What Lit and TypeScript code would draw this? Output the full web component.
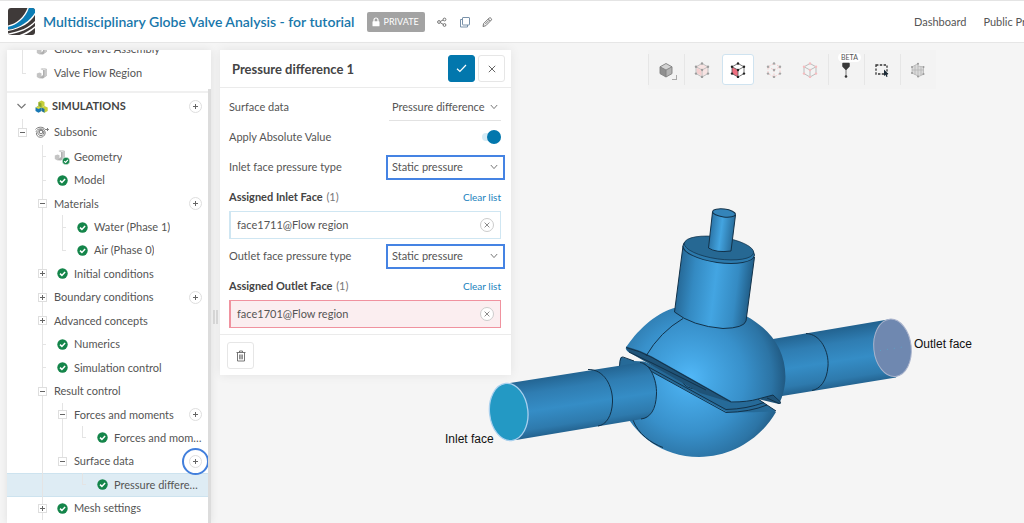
import { LitElement, html, svg, css, nothing } from "lit";
import { customElement, property } from "lit/decorators.js";
import { classMap } from "lit/directives/class-map.js";

type Guide = "" | "line" | "tick" | "end" | "top";

interface TreeNode {
  label: string;
  /** Guide cells drawn left of the node, one for each ancestor level. */
  guides: Guide[];
  toggle?: "+" | "-";
  icon?: "ok" | "part" | "flow";
  add?: boolean;
  ringed?: boolean;
  selected?: boolean;
}

const PARTS: TreeNode[] = [
  { label: "Globe Valve Assembly", guides: ["line"], icon: "part" },
  { label: "Valve Flow Region", guides: ["end"], icon: "part" },
];

const ROOT: TreeNode = { label: "Subsonic", guides: ["top"], toggle: "-", icon: "flow" };

const NODES: TreeNode[] = [
  { label: "Geometry", guides: ["", "tick"], icon: "part" },
  { label: "Model", guides: ["", "tick"], icon: "ok" },
  { label: "Materials", guides: ["", "line"], toggle: "-", add: true },
  { label: "Water (Phase 1)", guides: ["", "line", "tick"], icon: "ok" },
  { label: "Air (Phase 0)", guides: ["", "line", "end"], icon: "ok" },
  { label: "Initial conditions", guides: ["", "line"], toggle: "+", icon: "ok" },
  { label: "Boundary conditions", guides: ["", "line"], toggle: "+", add: true },
  { label: "Advanced concepts", guides: ["", "line"], toggle: "+" },
  { label: "Numerics", guides: ["", "tick"], icon: "ok" },
  { label: "Simulation control", guides: ["", "tick"], icon: "ok" },
  { label: "Result control", guides: ["", "line"], toggle: "-" },
  { label: "Forces and moments", guides: ["", "line", "line"], toggle: "-", add: true },
  { label: "Forces and moments 1", guides: ["", "line", "line", "end"], icon: "ok" },
  { label: "Surface data", guides: ["", "line", "top"], toggle: "-", add: true, ringed: true },
  { label: "Pressure difference 1", guides: ["", "line", "", "end"], icon: "ok", selected: true },
  { label: "Mesh settings", guides: ["", "line"], toggle: "+", icon: "ok" },
];

const okIcon = html`<svg width="11" height="11" viewBox="0 0 11 11" aria-hidden="true">
  <circle cx="5.5" cy="5.5" r="5.2" fill="#14854a" />
  <path d="M3 5.6 4.9 7.4 8.1 3.9" fill="none" stroke="#fff" stroke-width="1.5" />
</svg>`;

const partShape = svg`
  <path d="M.8 6.5 3.5 5.5 5.5 6.3V10L3 11.200.8 10Z" fill="#c4c4c4" />
  <path d="M4.5 2 7.2 1 11 2V8.500L7 11.500 3 11.200 5.500 9.200 7 8V3.200Z" fill="#b0b0b0" />
  <path d="M4.5 2 7.2 1 11 2 8.4 3.2Z" fill="#dedede" />
  <path d="M8.4 3.2 11 2V8.5L8.4 10.300Z" fill="#cbcbcb" />`;

const partIcon = html`<svg width="12" height="12" viewBox="0 0 12 12" aria-hidden="true">${partShape}</svg>`;

const partOkIcon = html`<svg width="16" height="16" viewBox="0 0 16 16" aria-hidden="true">
  ${partShape}
  <circle cx="12" cy="12" r="3.8" fill="#14854a" stroke="#fff" stroke-width=".6" />
  <path d="M10.2 12.1 11.6 13.4 13.9 10.9" fill="none" stroke="#fff" stroke-width="1.1" />
</svg>`;

const flowIcon = html`<svg width="14" height="12" viewBox="0 0 14 12" fill="none" stroke="#6d6d6d" stroke-width=".9" aria-hidden="true">
  <circle cx="6" cy="6" r="1.8" />
  <path d="M.5 3.4C3 .6 8 .4 10.2 3.5H13.4M12 2l1.5 1.5L12 5" />
  <path d="M1 5.8C2 2.6 7.5 1.8 9.5 4.5 11.5 8 8.5 11.3 5.5 11.3 2.5 11.3 .9 8.5 1.5 6.5" />
  <path d="M2.8 6.3C3 3.7 7 2.8 8.5 5.2 9.5 7.5 8 9.6 6 9.6 4 9.6 2.8 8 2.8 6.3" />
</svg>`;

@customElement("tree-row")
class TreeRow extends LitElement {
  @property({ attribute: false }) node!: TreeNode;

  static styles = css`
    :host { display: block; min-width: 0; }
    .row {
      display: flex;
      align-items: stretch;
      height: 100%;
      box-sizing: border-box;
      padding: 0 6px 0 5px;
      white-space: nowrap;
    }
    .selected {
      background: #deecf4;
      box-shadow: inset 0 1px #cde3ef, inset 0 -1px #cde3ef;
    }
    .cell {
      flex: 0 0 20px;
      display: grid;
      place-items: center;
      background-repeat: no-repeat;
    }
    .line, .tick, .end, .top {
      --guide: linear-gradient(#e4e4e4, #e4e4e4);
      background-image: var(--guide);
      background-size: 1px 100%;
      background-position: 10px 0;
    }
    .tick, .end { background-image: var(--guide), var(--guide); }
    .tick { background-size: 1px 100%, 4px 1px; background-position: 10px 0, 10px 50%; }
    .end { background-size: 1px 50%, 4px 1px; background-position: 10px 0, 10px 50%; }
    .top { background-size: 1px 50%; }
    button {
      display: grid;
      place-items: center;
      box-sizing: border-box;
      margin: 0;
      padding: 0;
      background: #fff;
      border: 1px solid #dedede;
      color: #666;
    }
    .toggle { width: 9px; height: 9px; }
    .add { position: relative; align-self: center; width: 13px; height: 13px; border-radius: 50%; margin-left: auto; flex: none; }
    .ring {
      position: absolute;
      inset: -8px;
      border: 2px solid #427fdc;
      border-radius: 50%;
    }
    .label {
      align-self: center;
      padding-left: 2px;
      min-width: 0;
      line-height: 16px;
      overflow: hidden;
      text-overflow: ellipsis;
    }
    svg { display: block; }
  `;

  private icon() {
    const { icon, label } = this.node;
    if (!icon) return nothing;
    const drawn = icon === "ok" ? okIcon : icon === "flow" ? flowIcon : label === "Geometry" ? partOkIcon : partIcon;
    return html`<span class="cell">${drawn}</span>`;
  }

  render() {
    const n = this.node;
    return html`<div class=${classMap({ row: true, selected: !!n.selected })}>
      ${n.guides.map((g, i) => html`<span class="cell ${g}">${
        n.toggle && i === n.guides.length - 1
          ? html`<button class="toggle" aria-label=${(n.toggle === "+" ? "Expand " : "Collapse ") + n.label}>
              <svg width="5" height="5" viewBox="0 0 5 5" stroke="currentColor"><path d=${n.toggle === "+" ? "M0 2.5H5M2.5 0V5" : "M0 2.5H5"} /></svg>
            </button>`
          : nothing
      }</span>`)}
      ${this.icon()}
      <span class="label">${n.label}</span>
      ${n.add
        ? html`<button class="add" aria-label=${"Add to " + n.label}>
            <svg width="5" height="5" viewBox="0 0 5 5" stroke="currentColor"><path d="M0 2.5H5M2.5 0V5" /></svg>
            ${n.ringed ? html`<span class="ring"></span>` : nothing}
          </button>`
        : nothing}
    </div>`;
  }
}

@customElement("valve-model")
class ValveModel extends LitElement {
  static styles = css`
    :host { display: block; }
    svg { display: block; width: 100%; height: 100%; }
    .edge { fill: none; stroke: #12324a; stroke-width: 1; }
    .note { font: 12px "Liberation Sans", Arial, sans-serif; fill: #111; }
  `;

  render() {
    return html`<svg viewBox="0 43 1024 480" role="img" aria-label="Globe valve with inlet face and outlet face">
      <defs>
        <radialGradient id="ball" gradientUnits="userSpaceOnUse" cx="690" cy="378" r="100">
          <stop offset="0" stop-color="#52b8f8" />
          <stop offset=".2" stop-color="#46a8e6" />
          <stop offset=".55" stop-color="#3890ca" />
          <stop offset=".82" stop-color="#2c74a5" />
          <stop offset="1" stop-color="#1d5177" />
        </radialGradient>
        <linearGradient id="inletPipe" gradientUnits="userSpaceOnUse" x1="570" y1="372" x2="579" y2="431">
          <stop offset="0" stop-color="#22628f" />
          <stop offset=".25" stop-color="#2f7db2" />
          <stop offset=".55" stop-color="#358dc6" />
          <stop offset=".85" stop-color="#2e7aad" />
          <stop offset="1" stop-color="#22608c" />
        </linearGradient>
        <linearGradient id="outletPipe" gradientUnits="userSpaceOnUse" x1="830" y1="329" x2="839" y2="388">
          <stop offset="0" stop-color="#22628f" />
          <stop offset=".25" stop-color="#2f7db2" />
          <stop offset=".55" stop-color="#358dc6" />
          <stop offset=".85" stop-color="#2e7aad" />
          <stop offset="1" stop-color="#22608c" />
        </linearGradient>
        <linearGradient id="neck" gradientUnits="userSpaceOnUse" x1="679" y1="280" x2="751" y2="289">
          <stop offset="0" stop-color="#276b9a" />
          <stop offset=".2" stop-color="#348ac2" />
          <stop offset=".5" stop-color="#43a5e2" />
          <stop offset=".8" stop-color="#358bc3" />
          <stop offset="1" stop-color="#215d87" />
        </linearGradient>
        <linearGradient id="stem" gradientUnits="userSpaceOnUse" x1="710" y1="232" x2="734" y2="235">
          <stop offset="0" stop-color="#2b75a8" />
          <stop offset=".45" stop-color="#43a4e0" />
          <stop offset="1" stop-color="#276a98" />
        </linearGradient>
      </defs>

      <path d="M770 339.5 888 319.5 Q912 340 896 377.5L776 397Z" fill="url(#outletPipe)" />
      <path class="edge" d="M806 333.5C821 334 829 352 828 366 827 381 820 389 812 390.5" />
      <ellipse cx="892.5" cy="347.8" rx="18.7" ry="28.8" transform="rotate(-6 892.5 347.8)" fill="#6f88b0" stroke="#a9b3cc" />
      <path d="M880 350.5 903 347" stroke="#5f9fc4" stroke-dasharray="1 6" />

      <path d="M621 357 Q619 359 620 365 L626 415 C637 434 661 457 699 457 733 457 762 437 776 412 L758 399 730 400 645 362 640 363 634 361Z" fill="url(#ball)" />
      <path d="M621 357 634 361 644 361.5 730 400 758 399 776 411 Q752 413 727 412 L643 367 619.5 366Z" fill="#266a98" />
      <path d="M681.500 378 712 393 706 391Q684 391 681.500 378Z" fill="#3485ba" />
      <path class="edge" d="M681.500 378C682 386 690 390 704 389.500" />
      <path class="edge" d="M619.5 366 Q620 356 623 357 L634 361M643 364 726 409.500 Q747 409 764 402.500M758 399 776 411M645 368 726 412.500 Q750 412 767 405" stroke-width=".9" />
      <path class="edge" d="M633 420C638 434 651 443 663 447.5" />

      <path d="M625.7 348 C636 332 654 314 674 308 L746 316 C772 330 787 352 785.3 381 Q784 394 779.500 403 L767 398 758 399 Q746 402.500 730 402.300 L630 353Q626 351 625.7 348Z" fill="url(#ball)" />
      <path d="M626 346.5 Q640 350 652 356.500 L731 401 731 402.5 700 393 632 354Q626 351 626 346.5Z" fill="#1f5378" />
      <path d="M758 399 773 395 781 403.500 779 404Z" fill="#1f5378" />
      <path class="edge" d="M626 347.5 Q640 351 652 357.500 L731 402 Q748 402 758 399L773 395 781 402.500 779 403.500 767 398" />
      <path class="edge" d="M629 352 652 363 706 390" stroke-width=".8" />
      <path class="edge" d="M683 318.5 Q660 332 646 356" />

      <path d="M510 383 640 362.5 Q658 370 656.5 394 Q655 413 645 418.5 L516 440Z" fill="url(#inletPipe)" />
      <path class="edge" d="M588 369.5C604 369 613 386 612.5 402 612 416 606 425 598 426" />
      <path class="edge" d="M640 362.5C650 363 657 380 656.5 394 656 410 650 418 641 419" />
      <ellipse cx="508.7" cy="412" rx="19.2" ry="28.7" transform="rotate(-6 508.7 412)" fill="#2399c4" stroke="#a9d0ee" stroke-width="1.3" />

      <path d="M683 246 674.5 312 Q692 326 723 328.5 Q744 328 746 321 L754.5 257Z" fill="url(#neck)" />
      <path class="edge" d="M683 246 674.5 312 Q692 326 723 328.5 Q744 328 746 321 L754.5 257" />
      <ellipse cx="718.7" cy="250.5" rx="36" ry="12" transform="rotate(8 718.7 250.5)" fill="#2c7aad" stroke="#12324a" />
      <ellipse cx="719" cy="248" rx="35" ry="11" transform="rotate(8 719 248)" fill="#266893" stroke="#12324a" stroke-width=".7" />
      <path d="M712.5 212 708.5 248 Q714 253 731 251 L735.5 215Z" fill="url(#stem)" />
      <path class="edge" d="M712.5 212 708.5 248 Q716 253 731 251 L735.5 215" />
      <ellipse cx="724" cy="213" rx="11.5" ry="4" transform="rotate(7 724 213)" fill="#3484b9" stroke="#12324a" />

      <text class="note" x="445" y="443">Inlet face</text>
      <text class="note" x="914" y="348">Outlet face</text>
    </svg>`;
  }
}

const HEX = "M8 1.5 14 4.8V11.6L8 15 2 11.6V4.8Z";
const dots = (color: string) =>
  svg`${[[8, 1.5], [14, 4.8], [14, 11.6], [8, 15], [2, 11.6], [2, 4.8], [8, 8]].map(
    ([x, y]) => svg`<circle cx=${x} cy=${y} r="1.2" fill=${color} />`
  )}`;

const TOOLS = [
  { name: "Shading", sep: true, art: svg`<path d="M8 1.5 14 4.8 8 8 2 4.8Z" fill="#d2d2d2" /><path d="M2 4.8 8 8V15L2 11.6Z" fill="#8f8f8f" /><path d="M14 4.8 8 8V15L14 11.6Z" fill="#b2b2b2" /><path d="${HEX}M2 4.8 8 8 14 4.8M8 8V15" fill="none" stroke="#808080" stroke-width=".9" />` },
  { name: "Select volumes", sep: true, art: svg`<path d=${HEX} fill="#f7e3e2" /><path d="${HEX}M2 4.8 8 8 14 4.8M8 8V15" fill="none" stroke="#c0c0c0" />${dots("#9c9c9c")}<path d="M3 6 7.3 8.5V13.5L3 11Z" fill="#f4cfcf" />` },
  { name: "Select faces", active: true, art: svg`<path d="M2 4.8 8 8V15L2 11.6Z" fill="#ef6f80" /><path d="${HEX}M2 4.8 8 8 14 4.8M8 8V15" fill="none" stroke="#555" stroke-width=".8" />${dots("#222")}` },
  { name: "Select edges", art: svg`<path d="${HEX}M2 4.8 8 8 14 4.8M8 8V15" fill="none" stroke="#f4caca" stroke-dasharray="2 1.5" />${dots("#a6a6a6")}` },
  { name: "Select vertices", art: svg`<path d="${HEX}M2 4.8 8 8 14 4.8M8 8V15" fill="none" stroke="#bdbdbd" />${dots("#f6bcbf")}` },
  { name: "Probe", sep: true, badge: "BETA", art: svg`<path d="M8 4V14" stroke="#777" /><path d="M5 1.5H11V4.2L8 7.2 5 4.2Z" fill="#3a3a3a" stroke="#3a3a3a" stroke-width="1.5" stroke-linejoin="round" /><circle cx="8" cy="14.5" r="1.3" fill="#333" />` },
  { name: "Box select", sep: true, art: svg`<rect x="2" y="3" width="11" height="9" fill="none" stroke="#333" stroke-width="1.3" stroke-dasharray="2.4 1.4" /><path d="M10 7.5 14.5 12 12.6 12.2 13.6 14.6 12.4 15 11.5 12.8 10 14Z" fill="#1b2a36" />` },
  { name: "Clip", sep: true, art: svg`<path d="M2 5 8 2V14L2 11Z M8 4 13.5 6V13L8 15Z" fill="#dadada" /><path d="M2 5 8 1.5V14L2 11ZM8 4 13.5 5V12L8 15M2 8 13.5 8M5 3V13M11 4V13" fill="none" stroke="#b5b5b5" stroke-width=".8" /><circle cx="8" cy="1.8" r="1" fill="#999" /><circle cx="2" cy="5" r="1" fill="#999" /><circle cx="2" cy="11" r="1" fill="#999" /><circle cx="8" cy="14.5" r="1" fill="#999" /><circle cx="13.5" cy="5" r="1" fill="#999" /><circle cx="13.5" cy="12" r="1" fill="#999" />` },
];

@customElement("app-root")
class AppRoot extends LitElement {
  static styles = css`
    :host {
      display: flex;
      flex-direction: column;
      height: 100vh;
      overflow: hidden;
      font: 11px/16px Lato, "Open Sans", sans-serif;
      color: #555;
      background: #f5f5f5;
    }
    * { box-sizing: border-box; }
    svg { display: block; }
    button, select, input { font: inherit; color: inherit; margin: 0; }
    button { padding: 0; border: 0; background: none; }
    a { color: inherit; text-decoration: none; }
    h1, h2, h3 { margin: 0; padding: 0; }

    .topbar {
      display: flex;
      align-items: center;
      flex: 0 0 43px;
      padding-left: 8px;
      background: #fff;
      border-top: 1px solid #e4e4e4;
      border-bottom: 1px solid #e6e6e6;
      white-space: nowrap;
    }
    .title { margin-left: 8px; font-size: 14px; line-height: 20px; font-weight: 600; color: #1877ab; }
    .badge {
      display: flex;
      align-items: center;
      gap: 4px;
      height: 20px;
      margin-left: 12px;
      padding: 0 6px 0 5px;
      border-radius: 2px;
      background: #a3a3a3;
      color: #fff;
      font-size: 9px;
    }
    .actions { display: flex; gap: 10px; margin-left: 12px; }
    .actions button { width: 12px; height: 12px; }
    .nav { display: flex; gap: 17px; flex: 0 0 110px; margin-left: auto; overflow: hidden; }

    .work { position: relative; display: flex; align-items: flex-start; flex: 1; min-height: 0; padding: 7px 0 0 7px; }
    .scene { position: absolute; inset: 0; }

    .side {
      position: relative;
      flex: 0 0 204px;
      align-self: stretch;
      display: flex;
      background: #fff;
      box-shadow: 0 0 8px rgba(0, 0, 0, 0.09);
    }
    .tree { flex: 1; min-width: 0; overflow: hidden; }
    .parts { display: grid; grid-auto-rows: 24px; margin-top: -13px; padding-bottom: 6px; border-bottom: 2px solid #f0f0f0; }
    .group { display: flex; align-items: center; height: 26px; padding: 0 6px 0 8px; font-weight: 700; color: #444; }
    .group .name { margin-left: 4px; }
    .group .mark { margin-left: 8px; }
    .plus { display: grid; place-items: center; width: 13px; height: 13px; margin-left: auto; border: 1px solid #dedede; border-radius: 50%; }
    .root { height: 26px; }
    .nodes { display: grid; grid-auto-rows: 1fr; height: 375px; }
    .thumb { flex: 0 0 3px; margin-top: 39px; background: #dcdcdc; }
    .grip { align-self: center; display: flex; gap: 1px; margin: 0 2px; padding-top: 60px; }
    .grip i { width: 2px; height: 14px; background: #dcdcdc; }

    .panel {
      position: relative;
      flex: 0 0 291px;
      background: #fff;
      box-shadow: 0 0 10px rgba(0, 0, 0, 0.08);
    }
    .head { display: flex; align-items: center; gap: 3px; height: 38px; padding: 0 6px 0 12px; border-bottom: 1px solid #ebebeb; }
    .head h2 { flex: 1; font-size: 13px; line-height: 18px; color: #444; }
    .square { display: grid; place-items: center; width: 27px; height: 27px; border: 1px solid #e6e6e6; border-radius: 3px; color: #666; background: #fff; }
    .apply { background: #0277ad; border-color: #0277ad; color: #fff; }
    .form { padding: 4px 10px 6px 9px; }
    .field { display: flex; align-items: center; justify-content: space-between; height: 30px; }
    .pick { position: relative; width: 112px; color: #555; }
    .pick select {
      appearance: none;
      display: block;
      width: 100%;
      height: 28px;
      padding: 0 14px 0 3px;
      border: 0;
      border-bottom: 1px solid #e2e2e2;
      border-radius: 0;
      background: transparent;
      outline: none;
    }
    .ringed select { height: 20px; border-bottom: 0; }
    .ringed::after { content: ""; position: absolute; inset: -2px -4px -3px -3px; border: 2px solid #4583e3; pointer-events: none; }
    .pick svg { position: absolute; right: 3px; top: 50%; margin-top: -3px; pointer-events: none; }
    .switch {
      appearance: none;
      display: flex;
      justify-content: flex-end;
      align-items: center;
      width: 19px;
      height: 8px;
      border-radius: 4px;
      background: #d6ebf5;
    }
    .switch::before { content: ""; width: 14px; height: 14px; border-radius: 50%; background: #0277ad; flex: none; }
    .assigned { height: 29px; }
    .assigned h3 { font-size: 11px; color: #444; }
    .count { font-weight: 400; color: #777; margin-left: 1px; }
    .clear { font-size: 10px; color: #2182bd; }
    .face { display: flex; align-items: center; justify-content: space-between; height: 28px; padding: 0 6px; border: 1px solid #cfe6f2; border-left-width: 2px; margin-bottom: 2px; }
    .face.alert { background: #fbeef0; border-color: #f0929f; margin-bottom: 0; }
    .remove { display: grid; place-items: center; width: 14px; height: 14px; border: 1px solid #ccc; border-radius: 50%; background: #fff; color: #666; }
    .foot { padding: 7px 7px 6px; border-top: 1px solid #ebebeb; }

    .tools { position: relative; display: flex; margin: 0 88px 0 auto; padding: 4px 0; background: #f3f3f3; }
    .tool { position: relative; display: grid; place-items: center; width: 36px; height: 31px; }
    .sep { box-shadow: inset 1px 0 #e6e6e6; }
    .active::before { content: ""; position: absolute; inset: 0 2px; background: #fff; border: 1px solid #cfe3f0; border-radius: 3px; }
    .tool svg { position: relative; }
    .corner::after { content: ""; position: absolute; right: 7px; bottom: 5px; width: 4px; height: 4px; border: solid #aaa; border-width: 0 1px 1px 0; }
    .beta { position: absolute; top: -1px; left: 10px; padding: 0 3px; border-radius: 5px; background: #fff; font-size: 7px; line-height: 9px; }
  `;

  private chevron() {
    return html`<svg width="8" height="6" viewBox="0 0 8 6" fill="none" stroke="#777" aria-hidden="true"><path d="M.8 1 4 4.6 7.2 1" /></svg>`;
  }

  private cross(size: number) {
    return html`<svg width=${size} height=${size} viewBox="0 0 8 8" fill="none" stroke="currentColor" aria-hidden="true"><path d="M.8.8 7.2 7.2M7.2.8.8 7.2" /></svg>`;
  }

  private select(id: string, label: string, value: string, ringed = false) {
    return html`<div class="field">
      <label for=${id}>${label}</label>
      <span class=${classMap({ pick: true, ringed })}>
        <select id=${id}><option>${value}</option></select>
        ${this.chevron()}
      </span>
    </div>`;
  }

  private face(title: string, name: string, alert: boolean) {
    return html`<div class="field assigned">
        <h3>${title} <span class="count">(1)</span></h3>
        <button class="clear">Clear list</button>
      </div>
      <div class=${classMap({ face: true, alert })}>
        <span>${name}</span>
        <button class="remove" aria-label=${"Remove " + name}>${this.cross(6)}</button>
      </div>`;
  }

  render() {
    return html`
      <header class="topbar">
        <svg width="27" height="27" viewBox="0 0 27 27" aria-hidden="true">
          <defs><clipPath id="tile"><rect width="27" height="27" rx="3" /></clipPath></defs>
          <g clip-path="url(#tile)">
            <rect width="27" height="27" fill="#3f3a39" />
            <path d="M-1 18.5C8 17 17 10 20.5-1H28V4C24 12 14 20-1 22Z" fill="#0b7db5" />
            <path d="M-1 18.3C8 17 17 10 20.5-1" fill="none" stroke="#fff" stroke-width="1.3" />
            <path d="M-1 22C13 20 23 12 28 3V5C24 13.500 14 20.500-1 23.300ZM-1 25.500C12 24 22 19 28 12V13.800C22 20.500 12 25.500-1 27ZM8 28C16 26 23 22 28 17.5V19C24 23 18 27 12 28Z" fill="#fff" />
          </g>
        </svg>
        <h1 class="title">Multidisciplinary Globe Valve Analysis - for tutorial</h1>
        <span class="badge">
          <svg width="8" height="10" viewBox="0 0 8 10" aria-hidden="true"><path d="M2 5V3a2 2 0 0 1 4 0V5" fill="none" stroke="#fff" stroke-width="1.2" /><rect x=".5" y="4.3" width="7" height="5" rx=".6" fill="#fff" /></svg>
          PRIVATE
        </span>
        <div class="actions">
          <button aria-label="Share"><svg width="10" height="12" viewBox="0 0 10 12" fill="none" stroke="#666" stroke-width=".9"><circle cx="2" cy="6" r="1.4" /><circle cx="7.5" cy="3.5" r="1.4" /><circle cx="7.5" cy="9" r="1.4" /><path d="M3.3 5.4 6.2 4M3.3 6.7 6.2 8.3" /></svg></button>
          <button aria-label="Duplicate"><svg width="12" height="12" viewBox="0 0 12 12" fill="none" stroke="#6b86a0" stroke-width=".9"><rect x="3.5" y="1.5" width="7" height="7.5" rx=".5" /><path d="M3.5 3.5H1.5V11H8.5V9" /></svg></button>
          <button aria-label="Rename"><svg width="12" height="12" viewBox="0 0 12 12" fill="none" stroke="#666" stroke-width=".9"><path d="M2 10.5 2.6 7.6 8.3 1.9Q9.3 1.4 10.2 2.5 10.9 3.3 10.4 4L4.8 9.7ZM7.3 3 9.3 5M4 8.3 8 4.3" /></svg></button>
        </div>
        <nav class="nav"><a href="#">Dashboard</a><a href="#">Public Projects</a></nav>
      </header>

      <main class="work">
        <valve-model class="scene"></valve-model>

        <aside class="side">
          <div class="tree">
            <div class="parts">${PARTS.map((n) => html`<tree-row .node=${n}></tree-row>`)}</div>
            <div class="group">
              <svg width="12" height="8" viewBox="0 0 12 8" fill="none" stroke="#777" stroke-width="1.2" aria-hidden="true"><path d="M2.5 2 6.5 6 10.5 2" /></svg>
              <svg class="mark" width="13" height="13" viewBox="0 0 13 13" aria-hidden="true">
                <path d="M6.5.5 9.5 2V6L6.5 7.5 3.5 6V2Z" fill="#c6cf3a" /><path d="M3.5 2 6.5 3.5V7.5L3.5 6Z" fill="#8aa62f" />
                <path d="M3.5 6 6.5 7.5V11L3.5 12.8.5 11V7.5Z" fill="#1878b5" /><path d="M3.5 6 6.5 7.5 3.5 9 .5 7.5Z" fill="#d3d93f" />
                <path d="M9.5 6 12.7 7.5V11L9.5 12.8 6.5 11V7.5Z" fill="#c6cf3a" /><path d="M6.5 7.5 9.5 9V12.8L6.5 11Z" fill="#1c6fa5" />
              </svg>
              <span class="name">SIMULATIONS</span>
              <button class="plus" aria-label="Add simulation"><svg width="5" height="5" viewBox="0 0 5 5" stroke="#666"><path d="M0 2.5H5M2.5 0V5" /></svg></button>
            </div>
            <tree-row class="root" .node=${ROOT}></tree-row>
            <div class="nodes">${NODES.map((n) => html`<tree-row .node=${n}></tree-row>`)}</div>
          </div>
          <div class="thumb"></div>
        </aside>
        <div class="grip"><i></i><i></i></div>

        <section class="panel">
          <div class="head">
            <h2>Pressure difference 1</h2>
            <button class="square apply" aria-label="Apply"><svg width="11" height="9" viewBox="0 0 11 9" fill="none" stroke="currentColor" stroke-width="1.2"><path d="M1 4.8 3.9 7.5 10 1" /></svg></button>
            <button class="square" aria-label="Close">${this.cross(8)}</button>
          </div>
          <div class="form">
            ${this.select("data", "Surface data", "Pressure difference")}
            <div class="field">
              <label for="absolute">Apply Absolute Value</label>
              <input class="switch" id="absolute" type="checkbox" checked />
            </div>
            ${this.select("inlet", "Inlet face pressure type", "Static pressure", true)}
            ${this.face("Assigned Inlet Face", "face1711@Flow region", false)}
            ${this.select("outlet", "Outlet face pressure type", "Static pressure", true)}
            ${this.face("Assigned Outlet Face", "face1701@Flow region", true)}
          </div>
          <div class="foot">
            <button class="square" aria-label="Delete"><svg width="10" height="12" viewBox="0 0 10 12" fill="none" stroke="#666" stroke-width=".9"><path d="M.5 2.5H9.5M3.5 2.5V1H6.5V2.5M1.5 2.5V11H8.5V2.5M3.7 4.5V9.3M5 4.5V9.3M6.3 4.5V9.3" /></svg></button>
          </div>
        </section>

        <div class="tools" role="toolbar" aria-label="View and selection">
          ${TOOLS.map((t, i) => html`<button class=${classMap({ tool: true, sep: !!t.sep, active: !!t.active, corner: i === 0 })} aria-label=${t.name}>
            <svg width="16" height="16" viewBox="0 0 16 16">${t.art}</svg>
            ${t.badge ? html`<span class="beta">${t.badge}</span>` : nothing}
          </button>`)}
        </div>
      </main>
    `;
  }
}
